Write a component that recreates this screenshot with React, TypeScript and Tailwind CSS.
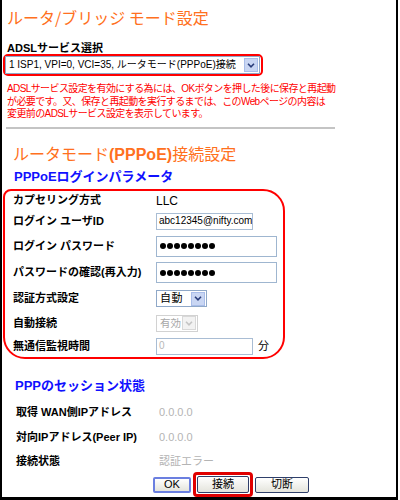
const jp = { fontFamily: '"Noto Sans CJK JP", "Liberation Sans", sans-serif' };
const mixed = { fontFamily: '"Liberation Sans", "Noto Sans CJK JP", sans-serif' };

function Chevron({ disabled }: { disabled?: boolean }) {
  return (
    <span
      className={`flex items-center justify-center w-[14px] h-[14px] border shrink-0 ${
        disabled ? 'bg-[#f2f2f2] border-[#d8d8d8]' : 'bg-[#c9d6f3] border-[#a9bde9]'
      }`}
    >
      <svg width="8" height="5" viewBox="0 0 8 5">
        <path d="M1 0.8 L4 3.8 L7 0.8" fill="none" stroke={disabled ? '#c4c4c4' : '#2a3d7a'} strokeWidth="1.6" />
      </svg>
    </span>
  );
}

function Select({ value, width, disabled, textClass }: { value: string; width: string; disabled?: boolean; textClass: string }) {
  return (
    <div
      className={`flex items-center justify-between border pl-[3px] pr-[1px] ${width} ${
        disabled ? 'border-[#d2d2d2] text-[#a8a8a8]' : 'border-[#8fa8c8] text-black'
      }`}
    >
      <span className={`${textClass} leading-none whitespace-nowrap`}>{value}</span>
      <Chevron disabled={disabled} />
    </div>
  );
}

function Field({ value, width, disabled }: { value: string; width: string; disabled?: boolean }) {
  return (
    <div
      className={`flex items-center h-[17px] border border-[#a9bdd4] px-[2px] overflow-hidden ${width} ${
        disabled ? 'text-[#b8b8b8]' : 'text-black'
      }`}
      style={{ fontFamily: '"Liberation Sans", sans-serif' }}
    >
      <span className="text-[10px] leading-none whitespace-nowrap">{value}</span>
    </div>
  );
}

function Password({ width }: { width: string }) {
  return (
    <div className={`flex items-center gap-[1px] h-[21px] border border-[#9fb6d0] px-[3px] ${width}`}>
      {[0, 1, 2, 3, 4, 5, 6, 7].map(i => (
        <span key={i} className="w-[6px] h-[6px] rounded-full bg-black" />
      ))}
    </div>
  );
}

function Button({ label, className }: { label: string; className: string }) {
  return (
    <button
      className={`rounded-[2px] bg-gradient-to-b from-white to-[#e4e4dc] text-[11px] leading-none ${className}`}
      style={mixed}
    >
      {label}
    </button>
  );
}

export default function App() {
  return (
    <div className="w-[400px] h-[500px] bg-white overflow-hidden">
      <div className="w-[398px] h-[500px] border-l-2 border-r-2 border-b-[3px] border-black overflow-hidden pt-[6px]" style={jp}>
        <h1 className="h-[22px] leading-[22px] text-[16px] text-[#ff7020] ml-[5px] whitespace-nowrap">ルータ/ブリッジ モード設定</h1>

        <div className="mt-[15px] h-[11px] leading-[11px] text-[11px] font-bold text-black ml-[5px]" style={mixed}>ADSLサービス選択</div>
        <div className="w-[260px] border-2 border-[#ff0000] rounded-[5px] ml-[1px]" style={mixed}>
          <Select value="1 ISP1, VPI=0, VCI=35, ルータモード(PPPoE)接続" width="w-[255px] h-[18px]" textClass="text-[10px]" />
        </div>

        <p className="mt-[7px] ml-[5px] h-[38px] text-[10px] leading-[12.5px] tracking-[-0.6px] text-[#ff0000] whitespace-nowrap" style={mixed}>
          ADSLサービス設定を有効にする為には、OKボタンを押した後に保存と再起動
          <br />
          が必要です。又、保存と再起動を実行するまでは、このWebページの内容は
          <br />
          変更前のADSLサービス設定を表示しています。
        </p>

        <div className="w-[329px] h-[2px] bg-[#c4c4c4] mt-[6px] ml-[4px]" />

        <h2 className="mt-[13px] h-[22px] leading-[22px] text-[16px] text-[#ff7020] ml-[11px] whitespace-nowrap">
          ルータモード<span className="font-bold" style={{ fontFamily: '"Liberation Sans", sans-serif' }}>(PPPoE)</span>接続設定
        </h2>

        <h3 className="mt-[4px] h-[18px] leading-[18px] text-[13px] font-bold text-[#1010ff] ml-[12px] whitespace-nowrap" style={mixed}>
          PPPoEログインパラメータ
        </h3>

        <div className="mt-[3px] ml-[1px] w-[282px] border-2 border-[#ff0000] rounded-[22px] rounded-tl-[8px] pl-[8px] pt-[1px]">
          <div className="grid grid-cols-[143px_1fr] items-center text-[11px] font-bold text-black whitespace-nowrap" style={mixed}>
            <div className="h-[17px] flex items-center">カプセリング方式</div>
            <div className="h-[17px] flex items-center font-normal text-[12px]" style={{ fontFamily: '"Liberation Sans", sans-serif' }}>LLC</div>

            <div className="h-[24px] flex items-center">ログイン ユーザID</div>
            <div className="h-[24px] flex items-center font-normal"><Field value="abc12345@nifty.com" width="w-[97px]" /></div>

            <div className="h-[26px] flex items-center">ログイン パスワード</div>
            <div className="h-[26px] flex items-center"><Password width="w-[121px]" /></div>

            <div className="h-[27px] flex items-center">パスワードの確認(再入力)</div>
            <div className="h-[27px] flex items-center"><Password width="w-[121px]" /></div>

            <div className="h-[25px] flex items-center">認証方式設定</div>
            <div className="h-[25px] flex items-center font-normal"><Select value="自動" width="w-[51px] h-[17px]" textClass="text-[11px] tracking-[0.5px]" /></div>

            <div className="h-[24px] flex items-center">自動接続</div>
            <div className="h-[24px] flex items-center font-normal"><Select value="有効" width="w-[42px] h-[17px]" disabled textClass="text-[10.5px]" /></div>

            <div className="h-[22px] flex items-center">無通信監視時間</div>
            <div className="h-[22px] flex items-center font-normal gap-[5px]">
              <Field value="0" width="w-[97px]" disabled />
              <span className="text-[11px]">分</span>
            </div>
          </div>
        </div>

        <h3 className="mt-[18px] h-[18px] leading-[18px] text-[13px] font-bold text-[#1010ff] ml-[13px] whitespace-nowrap" style={mixed}>
          PPPのセッション状態
        </h3>

        <div className="grid grid-cols-[143px_1fr] text-[11px] mt-[5px] ml-[14px] whitespace-nowrap" style={mixed}>
          <div className="h-[25px] flex items-center font-bold">取得 WAN側IPアドレス</div>
          <div className="h-[25px] flex items-center text-[#b4b4b4]">0.0.0.0</div>
          <div className="h-[24px] flex items-center font-bold">対向IPアドレス(Peer IP)</div>
          <div className="h-[24px] flex items-center text-[#b4b4b4]">0.0.0.0</div>
          <div className="h-[25px] flex items-center font-bold">接続状態</div>
          <div className="h-[25px] flex items-center text-[#b4b4b4]">認証エラー</div>
        </div>

        <div className="flex items-center h-[25px] ml-[151px] -mt-[2px] gap-[2px]">
          <Button label="OK" className="w-[38px] h-[16px] border-2 border-[#6b7fe0]" />
          <div className="flex h-[25px] border-[3px] border-[#e00000] rounded-[4px] p-[1px]">
            <Button label="接続" className="w-[52px] h-[17px] border border-[#2f3f6a]" />
          </div>
          <Button label="切断" className="w-[54px] h-[16px] border border-[#2f3f6a]" />
        </div>
      </div>
    </div>
  );
}
